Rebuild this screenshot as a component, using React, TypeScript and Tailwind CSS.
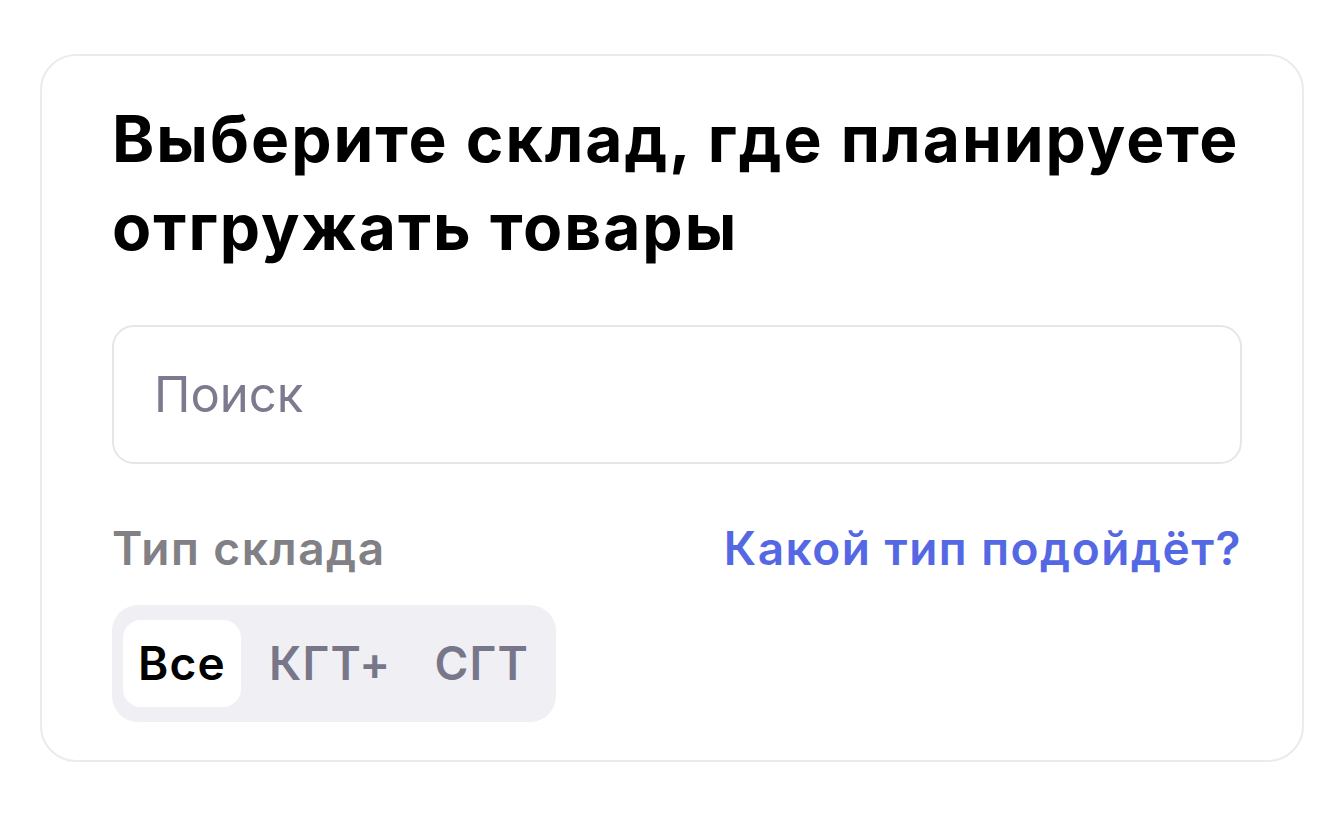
import React, { useState } from 'react';

const tabs = ['Все', 'КГТ+', 'СГТ'];

const WarehouseCard: React.FC = () => {
  const [active, setActive] = useState('Все');
  const [query, setQuery] = useState('');

  return (
    <div className="rounded-[36px] border-2 border-[#ebebeb] bg-white pl-[70px] pr-[60px] pt-[39px] pb-[38px]">
      {/* Heading */}
      <h1 className="text-[64px] font-bold leading-[88px] tracking-[2px] text-black">
        Выберите склад, где планируете
        <br />
        отгружать товары
      </h1>

      {/* Search */}
      <input
        value={query}
        onChange={(e) => setQuery(e.target.value)}
        placeholder="Поиск"
        className="mt-[54px] block h-[139px] w-full rounded-[22px] border-2 border-[#e6e6ea] bg-white px-[40px] text-[49px] text-black outline-none placeholder:text-[#7c7a8e]"
      />

      {/* Type row */}
      <div className="mt-[56px] flex items-center justify-between leading-[56px] tracking-[1.5px]">
        <span className="text-[46px] font-semibold text-[#808085]">Тип склада</span>
        <a href="#" className="text-[46px] font-semibold text-[#5468e4]">
          Какой тип подойдёт?
        </a>
      </div>

      {/* Segmented control */}
      <div className="mt-[29px] inline-flex gap-[13px] rounded-[26px] bg-[#f0f0f4] pl-[11px] pr-[12px] py-[15px]">
        {tabs.map((tab) => (
          <button
            key={tab}
            onClick={() => setActive(tab)}
            className={`h-[87px] rounded-[18px] px-[15px] text-[46px] font-semibold tracking-[1.2px] ${
              active === tab ? 'bg-white text-black' : 'text-[#787789]'
            }`}
          >
            {tab}
          </button>
        ))}
      </div>
    </div>
  );
};

export default function App() {
  return (
    <div
      className="min-h-screen bg-white px-[40px] pt-[54px]"
      style={{ fontFamily: 'Inter, "Noto Sans", sans-serif' }}
    >
      <WarehouseCard />
    </div>
  );
}
